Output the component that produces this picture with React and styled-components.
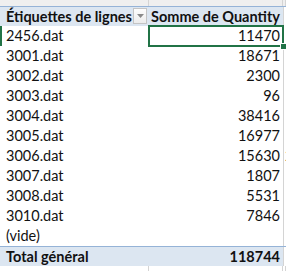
import React from 'react'
import styled, { createGlobalStyle } from 'styled-components'

const rows = [
  ['2456.dat', '11470'],
  ['3001.dat', '18671'],
  ['3002.dat', '2300'],
  ['3003.dat', '96'],
  ['3004.dat', '38416'],
  ['3005.dat', '16977'],
  ['3006.dat', '15630'],
  ['3007.dat', '1807'],
  ['3008.dat', '5531'],
  ['3010.dat', '7846'],
  ['(vide)', ''],
]

function App() {
  return (
    <>
      <GlobalStyle />
      <Sheet>
        <TopStrip>
          <StripCell $w={149} />
          <StripCell $w={134} />
          <StripCell $w={3} />
        </TopStrip>
        <Row $head>
          <LabelCell $bold>
            Étiquettes de lignes
            <DropButton>
              <svg width="7" height="4" viewBox="0 0 7 4">
                <path d="M0 0h7L3.5 4z" fill="#8a8a8a" />
              </svg>
            </DropButton>
          </LabelCell>
          <ValueCell $bold $left>Somme de Quantity</ValueCell>
          <Edge />
        </Row>
        {rows.map(([label, value], i) => (
          <Row key={label}>
            <LabelCell $mark={i === 0}>{label}</LabelCell>
            <ValueCell>
              {value}
              {i === 0 && (
                <>
                  <Selection />
                  <Handle />
                </>
              )}
            </ValueCell>
            <Edge>{i === 6 ? '2' : ''}</Edge>
          </Row>
        ))}
        <Row $total>
          <LabelCell $bold>Total général</LabelCell>
          <ValueCell $bold>118744</ValueCell>
          <Edge />
        </Row>
        <Tail>
          <StripCell $w={149} $white />
          <StripCell $w={134} $white />
          <StripCell $w={3} $white />
        </Tail>
      </Sheet>
    </>
  )
}

export default App

const GlobalStyle = createGlobalStyle`
  body {
    margin: 0;
    background: #fff;
    font-family: Lato, "Liberation Sans", sans-serif;
  }
`

const Sheet = styled.div`
  width: 286px;
  height: 271px;
  overflow: hidden;
  display: flex;
  flex-direction: column;
`

const TopStrip = styled.div`
  display: flex;
  height: 6px;
  flex-shrink: 0;
`

const Tail = styled(TopStrip)`
  height: 6px;
`

const StripCell = styled.div`
  width: ${(p) => p.$w}px;
  flex-shrink: 0;
  background: ${(p) => (p.$white ? '#fff' : '#efefef')};
  border-right: 1px solid #d4d4d4;
  box-sizing: border-box;
`

const Row = styled.div`
  display: grid;
  grid-template-columns: 149px 134px 3px;
  height: 20px;
  flex-shrink: 0;
  font-size: 14.5px;
  line-height: 20px;
  color: #111;
  background: ${(p) => (p.$head || p.$total ? '#dce6f1' : '#fff')};
  border-top: ${(p) => (p.$head || p.$total ? '1px solid #95b3d7' : 'none')};
  box-sizing: border-box;
`

const LabelCell = styled.div`
  position: relative;
  padding-left: 6px;
  font-weight: ${(p) => (p.$bold ? 700 : 400)};
  white-space: nowrap;
  box-shadow: ${(p) => (p.$mark ? 'inset 2px 0 0 #217346' : 'none')};
`

const ValueCell = styled.div`
  position: relative;
  padding: ${(p) => (p.$left ? '0 0 0 2px' : '0 3px 0 0')};
  text-align: ${(p) => (p.$left ? 'left' : 'right')};
  font-weight: ${(p) => (p.$bold ? 700 : 400)};
  white-space: nowrap;
`

const Edge = styled.div`
  border-left: 1px solid #d4d4d4;
  overflow: hidden;
  font-size: 14.5px;
  padding-left: 1px;
  background: #fff;
`

const DropButton = styled.span`
  position: absolute;
  right: 2px;
  top: 1px;
  width: 14px;
  height: 16px;
  box-sizing: border-box;
  border: 1px solid #c4c4c4;
  background: linear-gradient(#fdfdfd, #ececec);
  display: flex;
  align-items: center;
  justify-content: center;
`

const Selection = styled.span`
  position: absolute;
  left: -1px;
  top: -1px;
  right: -1px;
  bottom: -1px;
  border: 2px solid #217346;
  pointer-events: none;
`

const Handle = styled.span`
  position: absolute;
  right: -4px;
  bottom: -4px;
  width: 5px;
  height: 5px;
  background: #217346;
  border: 1px solid #fff;
`
